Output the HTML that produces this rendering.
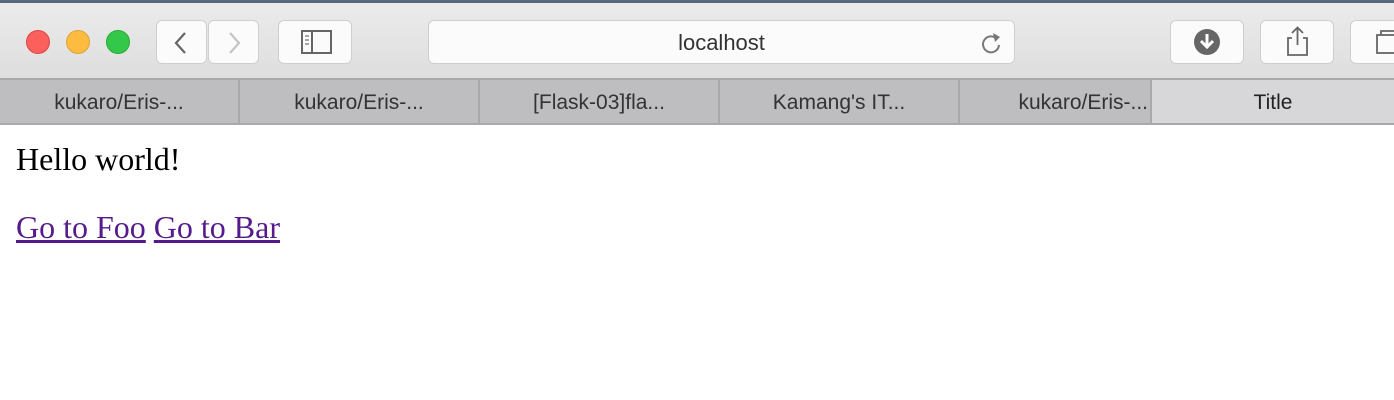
<!DOCTYPE html>
<html><head><style>
*{margin:0;padding:0;box-sizing:border-box}
body{width:1394px;height:400px;overflow:hidden;background:#fff;position:relative;font-family:"Liberation Sans",sans-serif}
.top{position:absolute;left:0;top:0;width:1394px;height:3px;background:#56687a}
.tb{position:absolute;left:0;top:3px;width:1394px;height:75px;background:linear-gradient(#ebebeb,#dedede)}
.btn{position:absolute;top:20px;height:44px;background:#fbfbfb;border:1px solid #cfcfcf;border-radius:6px}
.dot{position:absolute;top:30px;width:24px;height:24px;border-radius:50%}
.tabs{position:absolute;left:0;top:78px;width:1394px;height:47px;background:#bebdbf;border-top:2px solid #aaa9ab;border-bottom:2px solid #a9a8aa}
.tab{position:absolute;top:0;height:43px;line-height:45px;text-align:center;font-size:21px;color:#333;border-right:2px solid #a9a8aa}
.c{position:absolute;left:16px;font-family:"Liberation Serif",serif;font-size:32px;line-height:37px;color:#000}
a{color:#551a8b}
</style></head><body>
<div class="top"></div>
<div class="tb"></div>
<div class="dot" style="left:26px;background:#fc605c;border:1px solid #e0443e"></div>
<div class="dot" style="left:66px;background:#fdbc40;border:1px solid #dea236"></div>
<div class="dot" style="left:106px;background:#34c84a;border:1px solid #27aa35"></div>
<div class="btn" style="left:156px;width:51px"><svg width="51" height="44"><path d="M28 12 L19 22 L28 32" stroke="#666" stroke-width="2.2" fill="none"/></svg></div>
<div class="btn" style="left:208px;width:51px"><svg width="51" height="44"><path d="M21 12 L30 22 L21 32" stroke="#c4c4c4" stroke-width="2.2" fill="none"/></svg></div>
<div class="btn" style="left:278px;width:74px"><svg width="74" height="44"><rect x="23" y="10" width="29" height="22" stroke="#666" stroke-width="2" fill="none"/><line x1="33" y1="10" x2="33" y2="32" stroke="#666" stroke-width="2"/><path d="M26 15h4M26 19h4M26 23h4" stroke="#888" stroke-width="1.5"/></svg></div>
<div class="btn" style="left:428px;width:587px;text-align:center;line-height:44px;font-size:22px;color:#333">localhost<svg style="position:absolute;right:10px;top:9px" width="26" height="26"><path d="M19 9 A8 8 0 1 0 21 15" stroke="#777" stroke-width="2" fill="none"/><path d="M15 3 L22 7 L17 12Z" fill="#777"/></svg></div>
<div class="btn" style="left:1170px;width:74px"><svg width="74" height="44"><circle cx="36" cy="21" r="13" fill="#666"/><path d="M36 13v12M30 20l6 6 6-6" stroke="#fff" stroke-width="3" fill="none"/></svg></div>
<div class="btn" style="left:1260px;width:74px"><svg width="74" height="44"><path d="M31 17h-4v17h19v-17h-4" stroke="#666" stroke-width="1.8" fill="none"/><path d="M36.5 7v17M31 12l5.5-5.5 5.5 5.5" stroke="#666" stroke-width="1.8" fill="none"/></svg></div>
<div class="btn" style="left:1350px;width:74px"><svg width="74" height="44"><rect x="26" y="14" width="20" height="18" stroke="#666" stroke-width="1.8" fill="none"/><path d="M30 14v-4h20" stroke="#666" stroke-width="1.8" fill="none"/></svg></div>
<div class="tabs">
<div class="tab" style="left:0;width:240px">kukaro/Eris-...</div>
<div class="tab" style="left:240px;width:240px">kukaro/Eris-...</div>
<div class="tab" style="left:480px;width:240px">[Flask-03]fla...</div>
<div class="tab" style="left:720px;width:240px">Kamang's IT...</div>
<div class="tab" style="left:960px;width:192px;text-align:right;padding-right:2px">kukaro/Eris-...</div>
<div class="tab" style="left:1152px;width:242px;background:#d7d6d8;border-right:none;color:#222">Title</div>
</div>
<div class="c" style="top:141px">Hello world!</div>
<div class="c" style="top:209px"><a href="#">Go to Foo</a> <a href="#">Go to Bar</a></div>
</body></html>
